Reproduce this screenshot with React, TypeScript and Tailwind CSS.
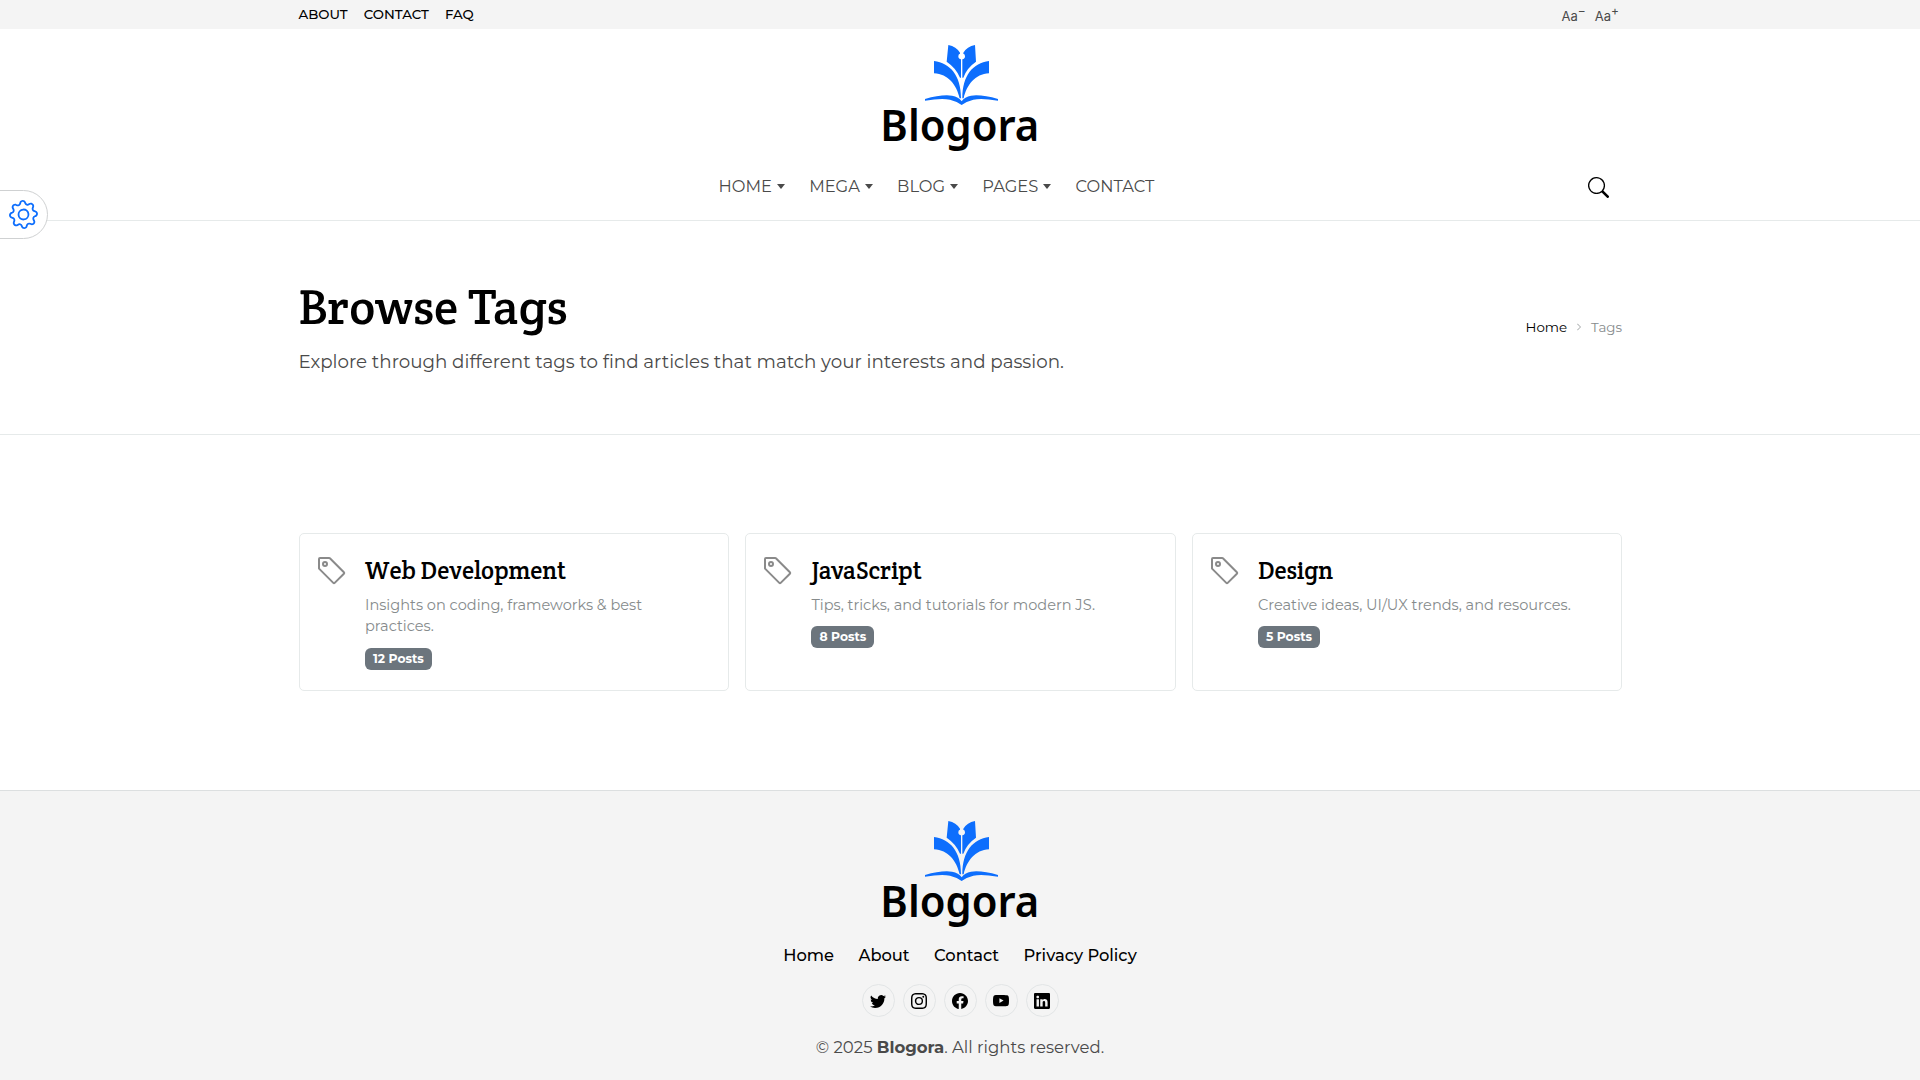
import {
    BsChevronRight,
    BsFacebook,
    BsGear,
    BsInstagram,
    BsLinkedin,
    BsSearch,
    BsTag,
    BsTwitter,
    BsYoutube,
} from 'react-icons/bs'

const TOP_LINKS = ['ABOUT', 'CONTACT', 'FAQ']

const NAV_ITEMS = [
    { label: 'HOME', menu: true },
    { label: 'MEGA', menu: true },
    { label: 'BLOG', menu: true },
    { label: 'PAGES', menu: true },
    { label: 'CONTACT', menu: false },
]

const TAGS = [
    { name: 'Web Development', text: 'Insights on coding, frameworks & best practices.', posts: 12 },
    { name: 'JavaScript', text: 'Tips, tricks, and tutorials for modern JS.', posts: 8 },
    { name: 'Design', text: 'Creative ideas, UI/UX trends, and resources.', posts: 5 },
]

const FOOTER_LINKS = ['Home', 'About', 'Contact', 'Privacy Policy']

const SOCIALS = [
    { name: 'Twitter', Icon: BsTwitter },
    { name: 'Instagram', Icon: BsInstagram },
    { name: 'Facebook', Icon: BsFacebook },
    { name: 'YouTube', Icon: BsYoutube },
    { name: 'LinkedIn', Icon: BsLinkedin },
]

function Logo() {
    return (
        <svg viewBox="-15 0 510 360" className="h-[120px] w-[170px] shrink-0 overflow-visible" aria-label="Blogora">
            <g fill="#0d6efd">
                {/* nib */}
                <path d="M205 15 Q229 20 240 38 L240 41 Q235 42 235 49 Q235 57 243 58 L243 113 L240 113 Q228 84 200 65 Z" />
                <path d="M285 15 Q261 20 250 38 L250 41 Q255 42 255 49 Q255 57 247 58 L247 113 L250 113 Q260 84 288 65 Z" />
                {/* pages */}
                <path d="M162 63 C210 70 243 105 243 175 L239 175 C230 135 205 102 162 100 Z" />
                <path d="M327 63 C279 70 247 105 247 175 L251 175 C260 135 285 102 327 100 Z" />
                {/* open book */}
                <path d="M135 177 Q183 163 216 167 Q236 170 245 184 Q254 170 273 167 Q306 163 354 177 L354 182 Q306 174 280 179 Q262 183 245 195 Q228 183 210 179 Q183 174 135 182 Z" />
            </g>
            <text x="1" y="302" textLength="477" lengthAdjust="spacingAndGlyphs" fontSize="128"
                className="fill-black font-['Noto_Sans',sans-serif] font-semibold">
                Blogora
            </text>
        </svg>
    )
}

function TagCard({ name, text, posts }: { name: string; text: string; posts: number }) {
    return (
        <a href="#" className="flex h-[158px] rounded-[5px] border border-[#e6eaea] bg-white pt-[21px] pl-[16.4px]">
            <BsTag size={32} className="mr-[17px] shrink-0 text-[#8a8a8a]" />
            <div className="pr-6">
                <h2 className="mt-[2px] font-['Crete_Round','DejaVu_Serif_Condensed',serif] text-[24.5px] leading-[28px] text-black">{name}</h2>
                <p className="mt-[10px] text-[14.56px] leading-[21.4px] text-[#868b8c]">{text}</p>
                <span className="mt-[10px] flex h-[22px] w-fit items-center rounded-[6px] bg-[#6c757d] px-2 text-[12.3px] font-bold text-white">
                    {posts} Posts
                </span>
            </div>
        </a>
    )
}

export default function App() {
    return (
        <div className="relative flex h-[1080px] w-[1920px] flex-col overflow-hidden bg-white font-['Montserrat','Inter',sans-serif] text-[#4a4a4a]">

            {/* Top bar */}
            <div className="flex h-[29px] shrink-0 items-center justify-between bg-[#f4f4f4] pr-[301px] pl-[298.5px]">
                <div className="flex gap-[16.2px] text-[13.3px] font-medium text-black">
                    {TOP_LINKS.map(l => <a key={l} href="#">{l}</a>)}
                </div>
                <div className="flex gap-[9px] pt-[5px] font-['Inter',sans-serif] text-[13px]">
                    <span>Aa<sup className="text-[12px]">−</sup></span>
                    <span>Aa<sup className="text-[12px]">+</sup></span>
                </div>
            </div>

            {/* Header */}
            <header className="flex h-[192px] shrink-0 flex-col items-center border-b border-[#e6eaea] pt-[11px]">
                <Logo />
                <div className="flex w-full items-center pt-[14px] pr-[311px] pl-[718.5px]">
                    <nav className="flex gap-[24.3px] text-[16.3px] leading-6">
                        {NAV_ITEMS.map(({ label, menu }) => (
                            <a key={label} href="#" className="flex items-center gap-[5px]">
                                {label}
                                {menu && <i className="border-x-[4.5px] border-t-[5px] border-x-transparent" />}
                            </a>
                        ))}
                    </nav>
                    <BsSearch size={21} className="mt-[3px] ml-auto text-black" />
                </div>
            </header>

            {/* Page title */}
            <section className="flex h-[214px] shrink-0 items-center justify-between border-b border-[#e6eaea] pr-[298px] pl-[298.5px]">
                <div className="pb-px">
                    <h1 className="font-['Crete_Round','DejaVu_Serif_Condensed',serif] text-[49px] leading-[58px] text-black">Browse Tags</h1>
                    <p className="mt-[12px] text-[18.28px] leading-7">Explore through different tags to find articles that match your interests and passion.</p>
                </div>
                <div className="flex items-center gap-2 text-[13.4px]">
                    <a href="#" className="text-black">Home</a>
                    <BsChevronRight size={8} className="text-[#868b8c]" />
                    <span className="text-[#868b8c]">Tags</span>
                </div>
            </section>

            {/* Tag cards */}
            <main className="mt-[98px] grid grid-cols-3 gap-4 pr-[298px] pl-[298.6px]">
                {TAGS.map(t => <TagCard key={t.name} {...t} />)}
            </main>

            {/* Footer */}
            <footer className="mt-auto flex h-[290px] shrink-0 flex-col items-center border-t border-[#dcdfe0] bg-[#f4f4f4] pt-[25px]">
                <Logo />
                <div className="mt-[7px] flex gap-[24.5px] text-[16.3px] leading-6 font-medium text-black">
                    {FOOTER_LINKS.map(l => <a key={l} href="#">{l}</a>)}
                </div>
                <div className="mt-[17px] flex gap-2">
                    {SOCIALS.map(({ name, Icon }) => (
                        <a key={name} href="#" title={name}
                            className="flex size-[33px] items-center justify-center rounded-full border border-[#e2e5e6] text-black">
                            <Icon size={16} />
                        </a>
                    ))}
                </div>
                <p className="mt-[18px] text-[16.5px] leading-6">© 2025 <strong className="font-bold">Blogora</strong>. All rights reserved.</p>
            </footer>

            {/* Settings tab */}
            <button className="absolute top-[190px] -left-px flex h-[49px] w-[49px] items-center justify-center rounded-r-full border border-[#cfd1d2] bg-white text-[#0d6efd]">
                <BsGear size={29} className="-rotate-4" />
            </button>
        </div>
    )
}
